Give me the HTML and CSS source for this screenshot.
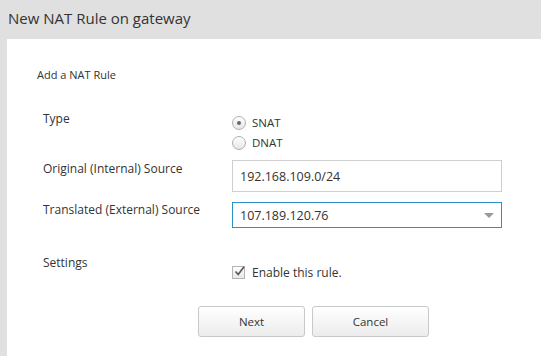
FILE: index.html
```html
<!DOCTYPE html>
<html lang="en">
<head>
    <meta charset="UTF-8">
    <title>New NAT Rule</title>
    <link rel="stylesheet" href="styles.css">
</head>
<body>
    <header class="title-bar">
        <h1>New NAT Rule on gateway</h1>
    </header>
    <section class="panel">
        <h2 class="section-title">Add a NAT Rule</h2>
        <form class="rule-form">
            <div class="row row-type">
                <label class="field-label">Type</label>
                <div class="options">
                    <label class="option">
                        <span class="radio checked"></span>SNAT
                    </label>
                    <label class="option">
                        <span class="radio"></span>DNAT
                    </label>
                </div>
            </div>

            <div class="row row-source">
                <label class="field-label" for="source">Original (Internal) Source</label>
                <input type="text" id="source" class="text-input" value="192.168.109.0/24">
            </div>

            <div class="row row-translated">
                <label class="field-label">Translated (External) Source</label>
                <div class="select-box">
                    <span>107.189.120.76</span>
                    <span class="caret"></span>
                </div>
            </div>

            <div class="row row-settings">
                <label class="field-label">Settings</label>
                <label class="check-option">
                    <span class="checkbox">
                        <svg width="13" height="13" viewBox="0 0 13 13"><path d="M2.5 6.5 L5.2 9.5 L11 1.8" fill="none" stroke="#555" stroke-width="1.6"/></svg>
                    </span>
                    Enable this rule.
                </label>
            </div>

            <div class="actions">
                <button type="button" class="btn btn-next">Next</button>
                <button type="button" class="btn btn-cancel">Cancel</button>
            </div>
        </form>
    </section>
</body>
</html>
```

FILE: styles.css
```css
*{
    box-sizing: border-box;
}

body{
    margin: 0;
    height: 356px;
    background-color: #e0e0e0;
    font-family: "Open Sans", Arial, sans-serif;
    color: #333;
    display: flex;
    flex-direction: column;
    overflow: hidden;
}

.title-bar{
    height: 39px;
    padding: 0 0 0 8px;
}

.title-bar h1{
    margin: 0;
    font-size: 15px;
    font-weight: 400;
    line-height: 37px;
    color: #333;
}

.panel{
    flex: 1;
    margin-left: 7px;
    background-color: #fff;
    padding: 29px 0 0 30px;
}

.section-title{
    margin: 0;
    font-size: 11px;
    font-weight: 400;
    line-height: 14px;
    color: #333;
}

.rule-form{
    padding-left: 6px;
    margin-top: 29px;
}

.row{
    display: grid;
    grid-template-columns: 189px 270px;
}

.field-label{
    font-size: 12px;
    line-height: 16px;
    color: #333;
}

.options{
    display: flex;
    flex-direction: column;
    gap: 5px;
    padding-top: 4px;
}

.option{
    display: flex;
    align-items: center;
    font-size: 11.5px;
    height: 15px;
    color: #333;
}

.radio{
    width: 14px;
    height: 14px;
    border-radius: 50%;
    border: 1px solid #b0b0b0;
    background: linear-gradient(#ffffff, #e6e6e6);
    margin-right: 6px;
    position: relative;
}

.radio.checked::after{
    content: "";
    position: absolute;
    left: 4px;
    top: 4px;
    width: 4px;
    height: 4px;
    border-radius: 50%;
    background: #666;
}

.row-source{
    margin-top: 10px;
}

.row-source .field-label{
    padding-top: 1px;
}

.text-input{
    width: 270px;
    height: 32px;
    border: 1px solid #cfcfcf;
    padding: 0 7px;
    font-family: inherit;
    font-size: 12.5px;
    color: #333;
    outline: none;
}

.row-translated{
    margin-top: 10px;
}

.select-box{
    width: 270px;
    height: 26px;
    border: 1px solid #2b8fc9;
    display: flex;
    align-items: center;
    justify-content: space-between;
    padding: 0 7px;
    font-size: 12.5px;
    color: #333;
}

.caret{
    width: 0;
    height: 0;
    border-left: 5px solid transparent;
    border-right: 5px solid transparent;
    border-top: 5px solid #999;
}

.row-settings{
    margin-top: 27px;
}

.check-option{
    display: flex;
    align-items: center;
    font-size: 12px;
    margin-top: 9px;
    color: #333;
}

.checkbox{
    width: 13px;
    height: 13px;
    border: 1px solid #b5b5b5;
    background: linear-gradient(#ffffff, #e8e8e8);
    margin-right: 7px;
    position: relative;
}

.checkbox svg{
    position: absolute;
    left: 0;
    top: -2px;
}

.actions{
    display: flex;
    gap: 7px;
    margin-top: 25px;
    padding-left: 155px;
}

.btn{
    height: 31px;
    border: 1px solid #c8c8c8;
    border-radius: 3px;
    background: linear-gradient(#ffffff, #ececec);
    font-family: inherit;
    font-size: 11.5px;
    color: #333;
    cursor: pointer;
}

.btn-next{
    width: 107px;
}

.btn-cancel{
    width: 117px;
}
```
